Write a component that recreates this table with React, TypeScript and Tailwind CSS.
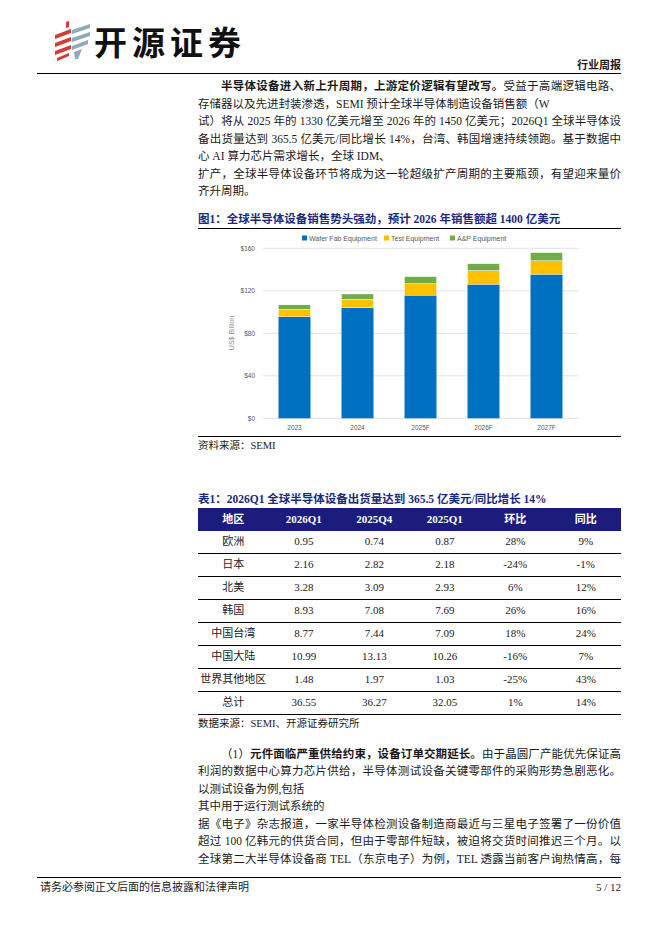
import React from 'react';

const serif = "font-['Liberation_Serif','Noto_Sans_CJK_SC',serif]";
const full = 'whitespace-nowrap text-justify [text-align-last:justify]';
const part = 'whitespace-nowrap';

// 图1 数据（US$ Billion）
const sales = [
  { year: '2023', wfe: 95.6, test: 6.8, ap: 4.4 },
  { year: '2024', wfe: 104.1, test: 7.9, ap: 5.0 },
  { year: '2025F', wfe: 115.8, test: 10.9, ap: 6.6 },
  { year: '2026F', wfe: 126.1, test: 12.9, ap: 6.5 },
  { year: '2027F', wfe: 135.5, test: 12.8, ap: 7.6 },
];

const rows = [
  ['欧洲', '0.95', '0.74', '0.87', '28%', '9%'],
  ['日本', '2.16', '2.82', '2.18', '-24%', '-1%'],
  ['北美', '3.28', '3.09', '2.93', '6%', '12%'],
  ['韩国', '8.93', '7.08', '7.69', '26%', '16%'],
  ['中国台湾', '8.77', '7.44', '7.09', '18%', '24%'],
  ['中国大陆', '10.99', '13.13', '10.26', '-16%', '7%'],
  ['世界其他地区', '1.48', '1.97', '1.03', '-25%', '43%'],
  ['总计', '36.55', '36.27', '32.05', '1%', '14%'],
];

function LogoMark() {
  return (
    <svg width="38" height="40" viewBox="0 0 38 40" className="block">
      <polygon points="13,1 16,0 16,6 13,7" fill="#d63a35" />
      <polygon points="2,14 18,8 18,12 2,18" fill="#d63a35" />
      <polygon points="2,22 18,16 18,20 2,26" fill="#d63a35" />
      <polygon points="2,30 18,24 18,28 2,34" fill="#d63a35" />
      <polygon points="4,37 16,32 16,35 4,40" fill="#d63a35" />
      <polygon points="19,9 37,3 37,7 19,13" fill="#8eaabb" />
      <polygon points="19,17 37,11 37,15 19,21" fill="#8eaabb" />
      <polygon points="19,25 35,19 35,23 19,29" fill="#8eaabb" />
      <polygon points="21,31 29,28 25,38 22,38" fill="#8eaabb" />
    </svg>
  );
}

function SalesChart() {
  const x0 = 65;
  const x1 = 380;
  const y0 = 188.3;
  const k = 170 / 160;
  const step = (x1 - x0) / 5;
  const bw = 32;
  const font = "'Liberation Sans', 'Noto Sans', sans-serif";
  return (
    <svg width="423" height="206" viewBox="0 0 423 206" className="block" fontFamily={font}>
      {[0, 40, 80, 120, 160].map((v) => (
        <g key={v}>
          <line x1={x0} x2={x1} y1={y0 - v * k} y2={y0 - v * k} stroke="#d9d9d9" strokeWidth="0.8" />
          <text x={57} y={y0 - v * k + 2.3} textAnchor="end" fontSize="6.5" fill="#595959">
            ${v}
          </text>
        </g>
      ))}
      <text
        x={36}
        y={103}
        transform="rotate(-90 36 103)"
        textAnchor="middle"
        fontSize="7"
        fill="#8c8c8c"
      >
        US$ Billion
      </text>
      {sales.map((d, i) => {
        const cx = x0 + step / 2 + i * step;
        const hb = d.wfe * k;
        const ht = d.test * k;
        const ha = d.ap * k;
        return (
          <g key={d.year}>
            <rect x={cx - bw / 2} y={y0 - hb} width={bw} height={hb} fill="#0070c0" />
            <rect x={cx - bw / 2} y={y0 - hb - ht} width={bw} height={ht} fill="#ffc000" stroke="#fff" strokeWidth="0.4" />
            <rect x={cx - bw / 2} y={y0 - hb - ht - ha} width={bw} height={ha} fill="#70ad47" stroke="#fff" strokeWidth="0.4" />
            <text x={cx} y={200} textAnchor="middle" fontSize="6.5" fill="#595959">
              {d.year}
            </text>
          </g>
        );
      })}
      <rect x={104} y={5.5} width={5} height={5} fill="#0070c0" />
      <text x={111} y={10.5} fontSize="7" fill="#595959">Wafer Fab Equipment</text>
      <rect x={186} y={5.5} width={5} height={5} fill="#ffc000" />
      <text x={193} y={10.5} fontSize="7" fill="#595959">Test Equipment</text>
      <rect x={252} y={5.5} width={5} height={5} fill="#70ad47" />
      <text x={259} y={10.5} fontSize="7" fill="#595959">A&amp;P Equipment</text>
    </svg>
  );
}

export default function App() {
  return (
    <div className={`w-[662px] h-[936px] bg-white flex flex-col text-[#1a1a1a] ${serif}`}>
      {/* 页眉 */}
      <div className="mx-[37px] mr-[41px] h-[74px] border-b border-black flex justify-between items-end">
        <div className="self-start mt-[21px] ml-[16px] flex items-center gap-[3px]">
          <LogoMark />
          <span className="font-['Noto_Sans_CJK_SC',sans-serif] font-bold text-[33px] leading-none tracking-[5px] text-[#111]">
            开源证券
          </span>
        </div>
        <span className="font-['Noto_Sans_CJK_SC',sans-serif] font-bold text-[11px] leading-none pb-[3px]">
          行业周报
        </span>
      </div>

      {/* 正文 */}
      <div className="ml-[198px] w-[423px] text-[11.5px]">
        <div className="mt-[4px] leading-[17.5px]">
          <div className={`${full} indent-[23px]`}>
            <b className="font-bold">半导体设备进入新上升周期，上游定价逻辑有望改写。</b>受益于高端逻辑电路、
          </div>
          <div className={part}>存储器以及先进封装渗透，SEMI 预计全球半导体制造设备销售额（W</div>
          <div className={full}>试）将从 2025 年的 1330 亿美元增至 2026 年的 1450 亿美元；2026Q1 全球半导体设</div>
          <div className={full}>备出货量达到 365.5 亿美元/同比增长 14%，台湾、韩国增速持续领跑。基于数据中</div>
          <div className={part}>心 AI 算力芯片需求增长，全球 IDM、</div>
          <div className={full}>扩产，全球半导体设备环节将成为这一轮超级扩产周期的主要瓶颈，有望迎来量价</div>
          <div className={part}>齐升周期。</div>
        </div>

        <div className="mt-[9px] leading-[18px] font-bold text-[#1a2b7c] border-b-[1.5px] border-black">
          图1：全球半导体设备销售势头强劲，预计 2026 年销售额超 1400 亿美元
        </div>
        <div className="pt-[1px] border-b-[1.5px] border-black">
          <SalesChart />
        </div>
        <div className="leading-[16px] text-[10.5px] mt-[1px]">资料来源：SEMI</div>

        <div className="mt-[36px] leading-[18px] font-bold text-[#1a2b7c]">
          表1：2026Q1 全球半导体设备出货量达到 365.5 亿美元/同比增长 14%
        </div>
        <div className="grid grid-cols-6 h-[23px] items-center bg-[#1b1c7c] text-white font-bold text-[11px] text-center">
          <span>地区</span>
          <span>2026Q1</span>
          <span>2025Q4</span>
          <span>2025Q1</span>
          <span>环比</span>
          <span>同比</span>
        </div>
        {rows.map((r) => (
          <div
            key={r[0]}
            className="grid grid-cols-6 h-[23px] items-center border-b border-black text-[11px] text-center"
          >
            {r.map((c, i) => (
              <span key={i}>{c}</span>
            ))}
          </div>
        ))}
        <div className="leading-[16px] text-[10.5px] mt-[1px]">数据来源：SEMI、开源证券研究所</div>

        <div className="mt-[14px] leading-[17.5px]">
          <div className={`${full} indent-[23px]`}>
            （1）<b className="font-bold">元件面临严重供给约束，设备订单交期延长。</b>由于晶圆厂产能优先保证高
          </div>
          <div className={full}>利润的数据中心算力芯片供给，半导体测试设备关键零部件的采购形势急剧恶化。</div>
          <div className={part}>以测试设备为例,包括</div>
          <div className={part}>其中用于运行测试系统的</div>
          <div className={full}>据《电子》杂志报道，一家半导体检测设备制造商最近与三星电子签署了一份价值</div>
          <div className={full}>超过 100 亿韩元的供货合同，但由于零部件短缺，被迫将交货时间推迟三个月。以</div>
          <div className={full}>全球第二大半导体设备商 TEL（东京电子）为例，TEL 透露当前客户询热情高，每</div>
        </div>
      </div>

      {/* 页脚 */}
      <div className="mt-auto mb-[40px] ml-[37px] mr-[41px] border-t border-black flex justify-between text-[11px] leading-[18px]">
        <span className="pl-[3px]">请务必参阅正文后面的信息披露和法律声明</span>
        <span>5 / 12</span>
      </div>
    </div>
  );
}
